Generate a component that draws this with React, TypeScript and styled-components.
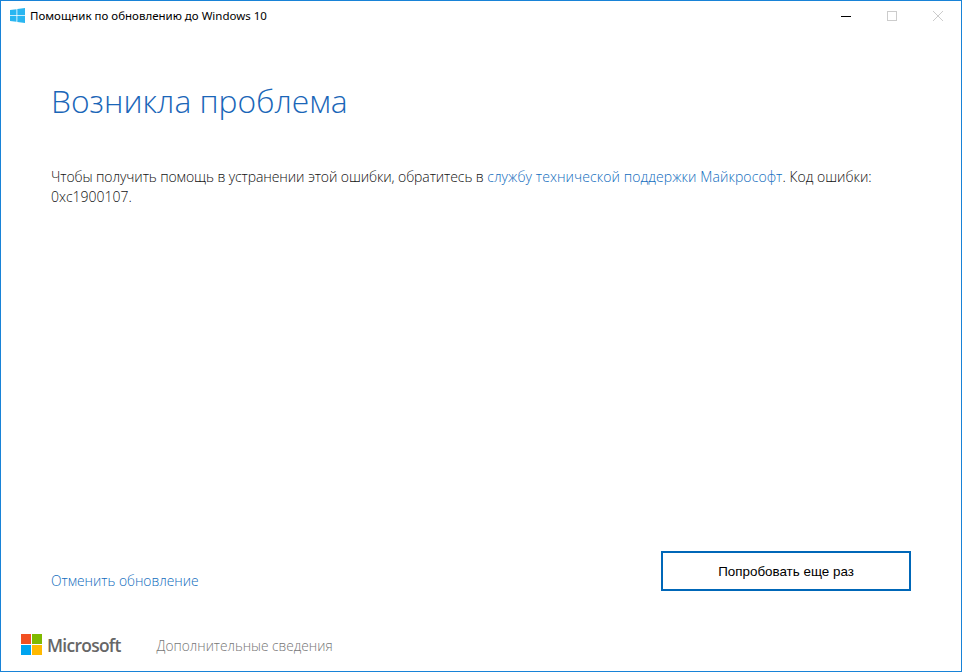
import React from 'react';
import styled, { createGlobalStyle } from 'styled-components';

const GlobalStyle = createGlobalStyle`
  html, body {
    margin: 0;
    padding: 0;
    background: #fff;
  }
`;

const Window = styled.div`
  box-sizing: border-box;
  width: 962px;
  height: 672px;
  display: flex;
  flex-direction: column;
  background: #fff;
  border: 1px solid #1883d7;
  font-family: "Open Sans", "Noto Sans", sans-serif;
`;

const TitleBar = styled.header`
  height: 29px;
  display: flex;
  align-items: center;
  padding-left: 9px;
  flex-shrink: 0;
`;

const TitleText = styled.span`
  margin-left: 5px;
  font-family: "Noto Sans", sans-serif;
  font-size: 11.5px;
  color: #000;
  flex: 1;
`;

const WindowButton = styled.div`
  width: 46px;
  height: 29px;
  display: flex;
  align-items: center;
  justify-content: center;
`;

const Content = styled.main`
  flex: 1;
  display: flex;
  flex-direction: column;
  padding: 0 50px;
`;

const Heading = styled.h1`
  margin: 48px 0 0;
  font-size: 31.8px;
  line-height: 46px;
  font-weight: 300;
  color: #1a66b8;
`;

const Message = styled.p`
  margin: 43px 0 0;
  width: 840px;
  font-size: 14px;
  line-height: 20px;
  font-weight: 300;
  color: #111;
`;

const PlainRun = styled.span`
  letter-spacing: -0.1px;
`;

const InlineLink = styled.a`
  color: #0f6cbd;
  letter-spacing: 0.08px;
  text-decoration: none;
`;

const Actions = styled.div`
  margin-top: auto;
  display: flex;
  align-items: flex-end;
  justify-content: space-between;
`;

const CancelLink = styled.a`
  font-size: 13.8px;
  font-weight: 300;
  line-height: 20px;
  color: #0f6cbd;
  text-decoration: none;
`;

const RetryButton = styled.button`
  box-sizing: border-box;
  width: 250px;
  height: 40px;
  background: #fff;
  border: 2px solid #0067b8;
  font-family: "Liberation Sans", Arial, sans-serif;
  font-size: 13.4px;
  color: #000;
`;

const Footer = styled.footer`
  height: 80px;
  box-sizing: border-box;
  padding: 43px 0 0 20px;
  flex-shrink: 0;
  display: flex;
  align-items: flex-start;
`;

const Brand = styled.div`
  display: flex;
  align-items: center;
  gap: 5px;
  height: 21px;
`;

const BrandName = styled.span`
  font-family: "Open Sans", sans-serif;
  font-size: 17.4px;
  font-weight: 600;
  letter-spacing: -0.7px;
  color: #666;
`;

const MoreInfo = styled.a`
  margin-left: 36px;
  font-size: 13.7px;
  font-weight: 300;
  line-height: 23px;
  color: #767676;
  text-decoration: none;
`;

const WindowsLogo = () => (
  <svg width="15" height="15" viewBox="0 0 15 15">
    <path fill="#29b6f1" d="M0 2.1 6.5 1.2V7H0zM7.3 1.1 15 0v7H7.3zM0 7.8h6.5v6L0 12.9zM7.3 7.8H15V15l-7.7-1.1z" />
  </svg>
);

const MicrosoftLogo = () => (
  <svg width="21" height="21" viewBox="0 0 21 21">
    <rect width="10" height="10" fill="#f25022" />
    <rect x="11" width="10" height="10" fill="#7fba00" />
    <rect y="11" width="10" height="10" fill="#00a4ef" />
    <rect x="11" y="11" width="10" height="10" fill="#ffb900" />
  </svg>
);

export default function App() {
  return (
    <>
      <GlobalStyle />
      <Window>
        <TitleBar>
          <WindowsLogo />
          <TitleText>Помощник по обновлению до Windows 10</TitleText>
          <WindowButton>
            <svg width="10" height="10" viewBox="0 0 10 10"><path d="M0 5.5h10" stroke="#000" /></svg>
          </WindowButton>
          <WindowButton>
            <svg width="10" height="10" viewBox="0 0 10 10"><rect x=".5" y=".5" width="9" height="9" fill="none" stroke="#ccc" /></svg>
          </WindowButton>
          <WindowButton>
            <svg width="10" height="10" viewBox="0 0 10 10"><path d="M0 0l10 10M10 0 0 10" stroke="#ccc" /></svg>
          </WindowButton>
        </TitleBar>
        <Content>
          <Heading>Возникла проблема</Heading>
          <Message>
            <PlainRun>Чтобы получить помощь в устранении этой ошибки, обратитесь в </PlainRun>
            <InlineLink href="#">службу технической поддержки Майкрософт</InlineLink>. Код ошибки: 0xc1900107.
          </Message>
          <Actions>
            <CancelLink href="#">Отменить обновление</CancelLink>
            <RetryButton>Попробовать еще раз</RetryButton>
          </Actions>
        </Content>
        <Footer>
          <Brand>
            <MicrosoftLogo />
            <BrandName>Microsoft</BrandName>
          </Brand>
          <MoreInfo href="#">Дополнительные сведения</MoreInfo>
        </Footer>
      </Window>
    </>
  );
}
